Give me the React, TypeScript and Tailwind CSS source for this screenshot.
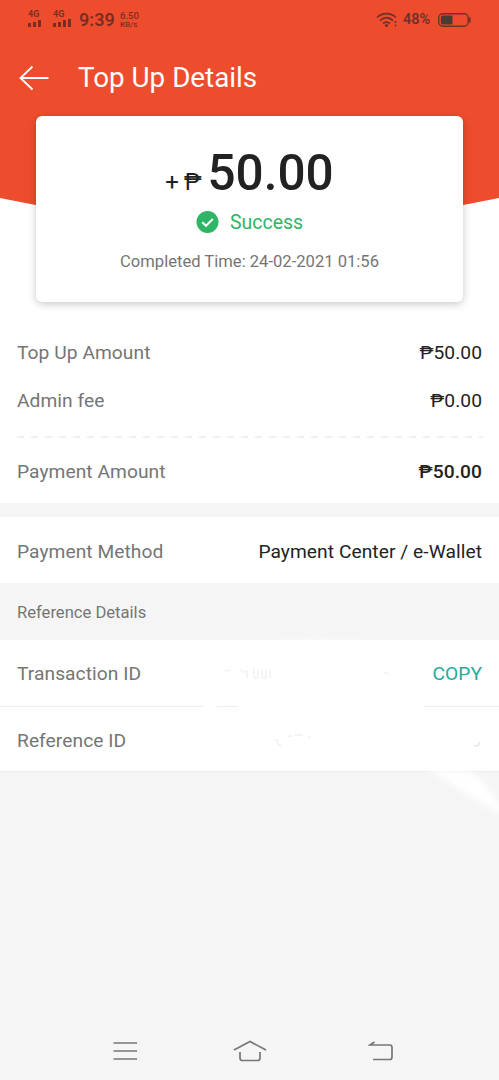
import type { ReactNode } from "react";

type RowProps = {
  label: string;
  children?: ReactNode;
  className?: string;
};

function Row({ label, children, className = "" }: RowProps) {
  return (
    <div className={`flex items-center justify-between px-[17px] pt-[2px] text-[19.2px] tracking-[0.06px] ${className}`}>
      <span className="text-[#757575]">{label}</span>
      {children}
    </div>
  );
}

function Signal({ bars }: { bars: number[] }) {
  return (
    <div className="flex flex-col items-start">
      <span className="text-[9px] leading-[9px] font-bold">4G</span>
      <div className="flex h-[8px] items-end gap-[2px]">
        {bars.map((h, i) => (
          <span key={i} className="w-[3px] bg-current" style={{ height: h }} />
        ))}
      </div>
    </div>
  );
}

function StatusBar() {
  return (
    <div className="flex h-[40px] items-center justify-between pr-[28px] pl-[28px] text-[#7b2d24]">
      <div className="flex items-center">
        <div className="-mt-[4px] flex w-[25px]">
          <Signal bars={[4, 5, 7]} />
        </div>
        <div className="-mt-[4px] flex w-[26px]">
          <Signal bars={[4, 5, 7, 8]} />
        </div>
        <span className="w-[41px] text-[18px] leading-[20px] font-semibold">9:39</span>
        <div className="flex flex-col text-[9.5px] leading-[9px] font-medium">
          <span>6.50</span>
          <span className="text-[8px]">KB/s</span>
        </div>
      </div>
      <div className="flex items-center text-[#70302a]">
        <svg className="h-[16px] w-[23px]" viewBox="0 0 23 16" fill="none" stroke="currentColor" strokeWidth="1.7">
          <path d="M1 5.5C6.5 0.2 14.5 0.2 20 5.5M4 8.7C8.2 4.8 12.8 4.8 17 8.7M7 11.7C9.5 9.6 11.5 9.6 14 11.7" />
          <circle cx="10.5" cy="13.5" r="1.6" fill="currentColor" stroke="none" />
          <path d="M19.5 9v2M19.5 12.5v2" strokeWidth="1.4" />
        </svg>
        <span className="ml-[4px] w-[34px] text-[14.5px] font-semibold">48%</span>
        <svg className="h-[14px] w-[34px]" viewBox="0 0 34 14" fill="none" stroke="currentColor">
          <rect x="1.7" y="0.8" width="29.5" height="12.4" rx="4" strokeWidth="1.4" />
          <path d="M5.5 2.5H15.5V11.5H5.5Q3.8 11.5 3.8 9.3V4.7Q3.8 2.5 5.5 2.5Z" fill="#4c3b33" stroke="none" />
          <path d="M32.8 4.5v5" strokeWidth="1.6" />
        </svg>
      </div>
    </div>
  );
}

// leftovers of the hidden id numbers
function Smudges() {
  return (
    <svg className="pointer-events-none absolute inset-x-0 top-[630px] h-[200px] w-full" viewBox="0 0 499 200" fill="none">
      <defs>
        <filter id="soft" x="-20%" y="-20%" width="140%" height="140%">
          <feGaussianBlur stdDeviation="3" />
        </filter>
      </defs>
      <path d="M262 10Q320 5 372 10Z" fill="#fff" filter="url(#soft)" />
      <path d="M427 138L472 143Q488 156 500 174V184Q482 174 427 138Z" fill="#fff" filter="url(#soft)" />
      <path d="M203 74H217V80H203ZM238 74H424V80H238Z" fill="#fff" />
      <g stroke="#f1f1f1" strokeWidth="1.4">
        <path d="M241 39q1 5 6 2v7M254 39v8q2 3 4 0v-8M262 39v8q2 3 4 0v-8M270 39v9" />
        <path d="M225 41l5-1M383 42l6 2M274 110l4 1v4h3M288 106h4M295 105h8M308 107h2" />
        <path d="M474 115q4 3 6-3" stroke="#e4e4e4" />
      </g>
    </svg>
  );
}

export default function App() {
  return (
    <div className="relative flex h-[1080px] w-[499px] flex-col overflow-hidden bg-[#f5f5f5] font-['Roboto','Noto_Sans',sans-serif]">
      <div className="relative h-[318px] bg-white">
        <div className="h-[247px] bg-[#ee4d2d] [clip-path:polygon(0_0,100%_0,100%_198px,50%_247px,0_198px)]">
          <StatusBar />
          <header className="flex h-[75px] items-center pl-[19px] text-white">
            <svg className="h-[26px] w-[30px]" viewBox="0 0 30 26" fill="none" stroke="#fff" strokeWidth="1.8">
              <path d="M13.5 1.5L1.5 13L13.5 24.5M1.5 13H29.5" />
            </svg>
            <h1 className="ml-[29px] text-[27.8px]">Top Up Details</h1>
          </header>
        </div>
        {/* amount card sits over the edge of the red banner */}
        <section className="absolute top-[116px] left-[36px] flex h-[186px] w-[427px] flex-col items-center rounded-[6px] bg-white shadow-[0_2px_8px_rgba(0,0,0,0.22)]">
          <div className="mt-[28px] flex h-[58px] items-baseline leading-[58px] text-[#222]">
            <span className="text-[24px]">+</span>
            <span className="ml-[5px] text-[24px]">₱</span>
            <span className="ml-[6px] text-[49.5px] font-medium">50.00</span>
          </div>
          <div className="mt-[6px] flex h-[28px] items-center gap-[11px]">
            <svg className="h-[23px] w-[23px]" viewBox="0 0 23 23" fill="none">
              <circle cx="11.5" cy="11" r="11" fill="#30b566" />
              <path d="M6.3 11.3L10 14.8L16.8 8" stroke="#fff" strokeWidth="2" />
            </svg>
            <span className="pt-[1px] text-[19.5px] text-[#30b566]">Success</span>
          </div>
          <p className="mt-[14px] text-[16.6px] leading-[24px] text-[#757575]">Completed Time: 24-02-2021 01:56</p>
        </section>
      </div>

      <section className="h-[185px] bg-white pt-[10px]">
        <Row label="Top Up Amount" className="h-[48px]">
          <span className="text-[#222]">₱50.00</span>
        </Row>
        <Row label="Admin fee" className="h-[48px]">
          <span className="text-[#222]">₱0.00</span>
        </Row>
        <svg className="mx-[17px] mt-[12px] h-[2px] w-[466px]" viewBox="0 0 466 2">
          <path d="M0 1H466" stroke="#ebebeb" strokeWidth="1.5" strokeDasharray="7 7" />
        </svg>
        <Row label="Payment Amount" className="h-[66px]">
          <span className="font-medium text-[#222]">₱50.00</span>
        </Row>
      </section>

      <section className="mt-[14px] h-[66px] bg-white">
        <Row label="Payment Method" className="h-[68px]">
          <span className="text-[#222]">Payment Center / e-Wallet</span>
        </Row>
      </section>

      <h2 className="flex h-[57px] items-center px-[17px] pt-[3px] text-[16.6px] text-[#757575]">Reference Details</h2>

      <section className="h-[132px] border-b border-[#eeeeee] bg-white">
        <Row label="Transaction ID" className="h-[67px] border-b border-[#eeeeee]">
          <span className="text-[#26aa99]">COPY</span>
        </Row>
        <Row label="Reference ID" className="h-[66px]" />
      </section>
      <Smudges />

      <nav className="mt-auto flex h-[60px] items-center justify-between pt-[2px] pr-[105px] pl-[113px] text-[#777]">
        <svg className="h-[20px] w-[25px]" viewBox="0 0 25 20" stroke="currentColor" strokeWidth="1.7">
          <path d="M0.5 2H24M0.5 10H24M0.5 18H24" />
        </svg>
        <svg className="-ml-[7px] h-[22px] w-[34px]" viewBox="0 0 34 22" fill="none" stroke="currentColor" strokeWidth="1.7">
          <path d="M1 10L17 1.5L33 10M7 12V18Q7 20.5 9.5 20.5H24.5Q27 20.5 27 18V12" />
        </svg>
        <svg className="h-[22px] w-[26px]" viewBox="0 0 26 22" fill="none" stroke="currentColor" strokeWidth="1.7">
          <path d="M6.5 2L2 5H22Q24 5 24 7.5V17Q24 19.5 22 19.5H5" />
        </svg>
      </nav>
    </div>
  );
}
